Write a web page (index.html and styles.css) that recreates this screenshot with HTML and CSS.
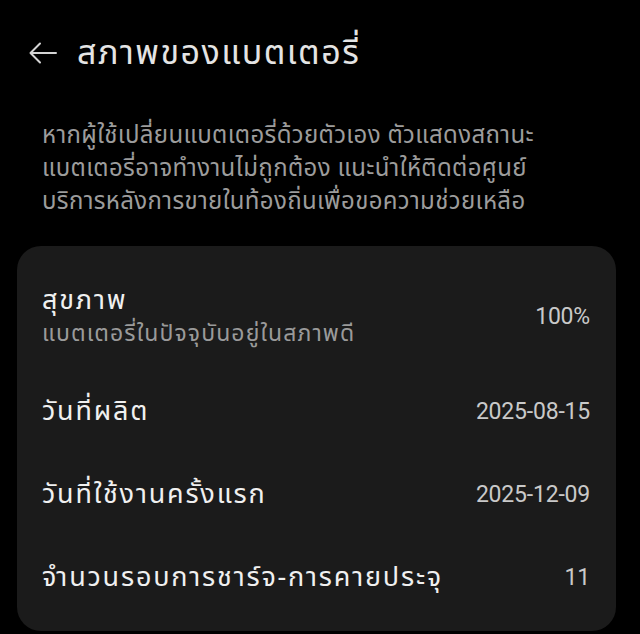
FILE: index.html
```html
<!DOCTYPE html>
<html lang="th">
<head>
  <meta charset="UTF-8">
  <title>สภาพของแบตเตอรี่</title>
  <link rel="stylesheet" href="styles.css">
</head>
<body>
  <header class="topbar">
    <svg class="back" width="28" height="22" viewBox="0 0 28 22">
      <path d="M27 11H2M11 1.5L1.5 11l9.5 9.5" fill="none" stroke="#d4d4d4" stroke-width="2" stroke-linecap="round" stroke-linejoin="round"/>
    </svg>
    <h1>สภาพของแบตเตอรี่</h1>
  </header>

  <p class="note">หากผู้ใช้เปลี่ยนแบตเตอรี่ด้วยตัวเอง ตัวแสดงสถานะ<br>แบตเตอรี่อาจทำงานไม่ถูกต้อง แนะนำให้ติดต่อศูนย์<br>บริการหลังการขายในท้องถิ่นเพื่อขอความช่วยเหลือ</p>

  <div class="card">
    <div class="row first">
      <div class="label">
        <div class="title">สุขภาพ</div>
        <div class="sub">แบตเตอรี่ในปัจจุบันอยู่ในสภาพดี</div>
      </div>
      <div class="value">100%</div>
    </div>
    <div class="row">
      <div class="title">วันที่ผลิต</div>
      <div class="value">2025-08-15</div>
    </div>
    <div class="row">
      <div class="title">วันที่ใช้งานครั้งแรก</div>
      <div class="value">2025-12-09</div>
    </div>
    <div class="row">
      <div class="title">จำนวนรอบการชาร์จ-การคายประจุ</div>
      <div class="value">11</div>
    </div>
  </div>
</body>
</html>
```

FILE: styles.css
```css
body {
  margin: 0;
  background-color: #000;
  color: #ececec;
  font-family: "Noto Sans Thai", "Noto Sans", "DejaVu Sans", sans-serif;
}

.topbar {
  display: flex;
  align-items: center;
  gap: 20px;
  padding: 31px 0 0 29px;
  height: 44px;
}

.back {
  flex: none;
}

h1 {
  margin: 0;
  font-size: 34px;
  font-weight: 400;
  letter-spacing: 1.5px;
  color: #e4e4e4;
  white-space: nowrap;
}

.note {
  margin: 45px 0 0 42px;
  font-size: 24px;
  line-height: 33px;
  letter-spacing: 0.35px;
  color: #9c9c9c;
  white-space: nowrap;
}

.card {
  margin: 27px 24px 0 17px;
  background-color: #1b1b1b;
  border-radius: 24px;
  padding: 17px 26px 12px 25px;
}

.row {
  display: flex;
  align-items: center;
  justify-content: space-between;
  height: 83px;
}

.row.first {
  height: 107px;
}

.title {
  font-size: 27px;
  line-height: 34px;
  letter-spacing: 1.8px;
  color: #f0f0f0;
  white-space: nowrap;
}

.sub {
  font-size: 23px;
  line-height: 32px;
  letter-spacing: 1.1px;
  color: #9a9a9a;
  white-space: nowrap;
}

.value {
  font-family: Roboto, "Liberation Sans", sans-serif;
  font-size: 23px;
  letter-spacing: -0.2px;
  color: #c9c9c9;
}
```
